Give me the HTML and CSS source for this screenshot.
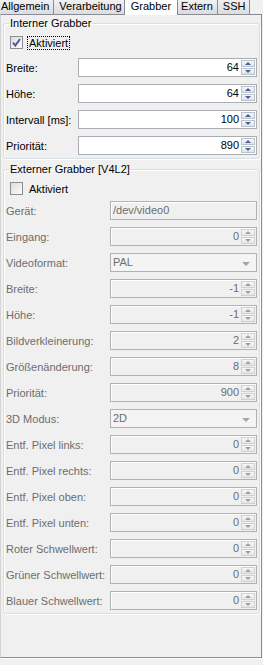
FILE: index.html
```html
<!DOCTYPE html>
<html lang="de">
<head>
  <meta charset="UTF-8">
  <title>Grabber</title>
  <link rel="stylesheet" href="styles.css">
</head>
<body>
  <div class="tabbar">
    <div class="tab">Allgemein</div>
    <div class="tab">Verarbeitung</div>
    <div class="tab active">Grabber</div>
    <div class="tab">Extern</div>
    <div class="tab">SSH</div>
  </div>

  <div class="pane">
    <fieldset class="group internal">
      <legend>Interner Grabber</legend>
      <label class="check focus">
        <span class="box checked">
          <svg width="11" height="11" viewBox="0 0 11 11"><path d="M2 5.5 L4.3 8.5 L9 2" fill="none" stroke="#4a5d97" stroke-width="2"/></svg>
        </span>
        <span class="check-text">Aktiviert</span>
      </label>
      <div class="form">
        <span class="label">Breite:</span>
        <div class="spin"><span class="val">64</span><span class="btns"><i class="up"></i><i class="down"></i></span></div>
        <span class="label">Höhe:</span>
        <div class="spin"><span class="val">64</span><span class="btns"><i class="up"></i><i class="down"></i></span></div>
        <span class="label">Intervall [ms]:</span>
        <div class="spin"><span class="val">100</span><span class="btns"><i class="up"></i><i class="down"></i></span></div>
        <span class="label">Priorität:</span>
        <div class="spin"><span class="val">890</span><span class="btns"><i class="up"></i><i class="down"></i></span></div>
      </div>
    </fieldset>

    <fieldset class="group external disabled">
      <legend>Externer Grabber [V4L2]</legend>
      <label class="check">
        <span class="box"></span>
        <span class="check-text">Aktiviert</span>
      </label>
      <div class="form" id="ext-form"></div>
    </fieldset>
  </div>
  <div class="bottom"></div>

  <script>
    // fields of the V4L2 grabber: [label, type, value]
    const fields = [
      ['Gerät:', 'line', '/dev/video0'],
      ['Eingang:', 'spin', '0'],
      ['Videoformat:', 'combo', 'PAL'],
      ['Breite:', 'spin', '-1'],
      ['Höhe:', 'spin', '-1'],
      ['Bildverkleinerung:', 'spin', '2'],
      ['Größenänderung:', 'spin', '8'],
      ['Priorität:', 'spin', '900'],
      ['3D Modus:', 'combo', '2D'],
      ['Entf. Pixel links:', 'spin', '0'],
      ['Entf. Pixel rechts:', 'spin', '0'],
      ['Entf. Pixel oben:', 'spin', '0'],
      ['Entf. Pixel unten:', 'spin', '0'],
      ['Roter Schwellwert:', 'spin', '0'],
      ['Grüner Schwellwert:', 'spin', '0'],
      ['Blauer Schwellwert:', 'spin', '0']
    ];

    const form = document.getElementById('ext-form');
    let html = '';
    for (const [label, type, value] of fields) {
      html += `<span class="label">${label}</span>`;
      if (type === 'spin') {
        html += `<div class="spin"><span class="val">${value}</span><span class="btns"><i class="up"></i><i class="down"></i></span></div>`;
      } else if (type === 'combo') {
        html += `<div class="combo"><span class="val">${value}</span><i class="arrow"></i></div>`;
      } else {
        html += `<div class="line"><span class="val">${value}</span></div>`;
      }
    }
    form.innerHTML = html;
  </script>
</body>
</html>
```

FILE: styles.css
```css
body {
  margin: 0;
  width: 263px;
  height: 665px;
  overflow: hidden;
  background-color: #f0f0f0;
  font-family: "Liberation Sans", Arial, sans-serif;
  font-size: 11px;
  color: #000;
}

.tabbar {
  display: flex;
  align-items: flex-end;
  height: 14px;
  margin-left: -4px;
  position: relative;
  z-index: 1;
}

.tab {
  height: 16px;
  box-sizing: border-box;
  padding: 0 4px 2px 5px;
  line-height: 12px;
  border: 1px solid #898c95;
  border-bottom: none;
  margin-left: -1px;
  background: linear-gradient(#f2f2f2, #dcdcdc);
  white-space: nowrap;
  display: flex;
  align-items: flex-end;
}

.tab.active {
  height: 18px;
  margin-bottom: -1px;
  padding: 0 6px 3px;
  margin-left: -3px;
  margin-right: -2px;
  background: #fff;
  position: relative;
}

.pane {
  height: 644px;
  box-sizing: border-box;
  border: 1px solid #898c95;
  border-left-color: #d4d4d4;
  background-color: #f0f0f0;
  width: 262px;
  padding: 2px 1px 0 2px;
}

.bottom {
  height: 7px;
  border-top: 1px solid #fff;
}

.group {
  margin: 0;
  padding: 0 2px 3px 2px;
  border: 1px solid #d5dfe5;
  border-radius: 3px;
  box-shadow: inset 1px 1px 0 #fff, 1px 1px 0 #fff;
  width: 257px;
  box-sizing: border-box;
}

.group legend {
  padding: 0 1px;
  margin-left: 3px;
  line-height: 13px;
}

.external {
  margin-top: 4px;
}

.check {
  display: flex;
  align-items: center;
  gap: 4px;
  margin: 5px 0 0 4px;
  height: 15px;
  width: max-content;
}

.box {
  width: 13px;
  height: 13px;
  box-sizing: border-box;
  border: 1px solid #8e8f8f;
  background: linear-gradient(135deg, #dcdcdc, #fcfcfc);
  display: flex;
  align-items: center;
  justify-content: center;
}

.check-text {
  padding: 0 1px;
  border: 1px dotted transparent;
  line-height: 12px;
}

.focus .check-text {
  border-color: #000;
}

.form {
  display: grid;
  grid-template-columns: 72px 1fr;
  row-gap: 7px;
  align-items: center;
  margin-top: 8px;
}

.external .form {
  grid-template-columns: 104px 1fr;
  margin-top: 5px;
}

.spin,
.combo,
.line {
  height: 19px;
  box-sizing: border-box;
  border: 1px solid #abadb3;
  background: #fff;
  display: flex;
  align-items: center;
}

.val {
  flex: 1;
  line-height: 17px;
}

.spin .val {
  text-align: right;
  padding-right: 2px;
}

.btns {
  width: 15px;
  height: 17px;
  box-sizing: border-box;
  padding: 1px 1px 1px 0;
  display: flex;
  flex-direction: column;
  gap: 1px;
}

.btns i {
  flex: 1;
  border: 1px solid #b8c2cd;
  background: linear-gradient(#f6f8fa, #dde3ea);
  display: flex;
  align-items: center;
  justify-content: center;
}

.btns i::after {
  content: "";
  border-left: 3px solid transparent;
  border-right: 3px solid transparent;
}

.btns .up::after {
  border-bottom: 3px solid #4d5f8c;
}

.btns .down::after {
  border-top: 3px solid #4d5f8c;
}

.combo .val,
.line .val {
  padding-left: 2px;
}

.combo .arrow {
  width: 0;
  height: 0;
  border-left: 4px solid transparent;
  border-right: 4px solid transparent;
  border-top: 4px solid #a4a4a4;
  margin: 3px 6px 0 0;
}

/* disabled look of the external grabber */
.disabled .label,
.disabled .val {
  color: #6d6d6d;
}

.disabled .spin,
.disabled .line {
  background: #f0f0f0;
  border-color: #adb2b5;
  box-shadow: inset 1px 1px 0 #fff;
}

.disabled .combo {
  background: #f4f4f4;
  border-color: #adb2b5;
}

.disabled .btns i {
  border-color: #d0d0d0;
  background: linear-gradient(#f6f6f6, #e8e8e8);
}

.disabled .btns .up::after {
  border-bottom-color: #a0a0a0;
}

.disabled .btns .down::after {
  border-top-color: #a0a0a0;
}
```
